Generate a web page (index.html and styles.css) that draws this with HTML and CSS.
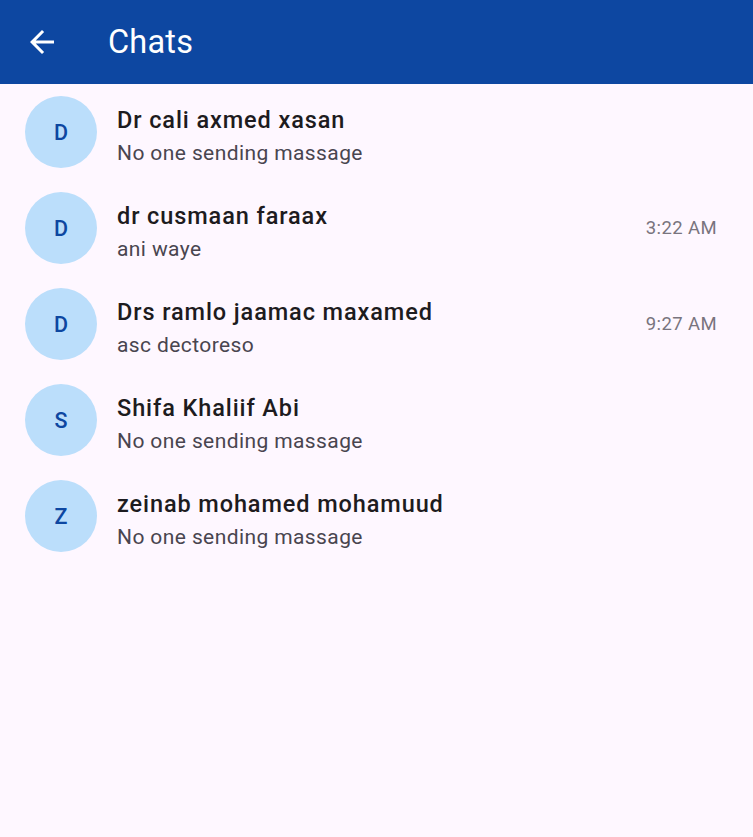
FILE: index.html
```html
<!DOCTYPE html>
<html>
<head>
<meta charset="utf-8">
<link rel="stylesheet" href="styles.css">
</head>
<body>
<header class="appbar">
  <button class="back" aria-label="Back">
    <svg width="36" height="36" viewBox="0 0 24 24"><path d="M20 11H7.83l5.59-5.59L12 4l-8 8 8 8 1.41-1.41L7.83 13H20v-2z" fill="#fff"/></svg>
  </button>
  <h1 class="title">Chats</h1>
</header>
<ul class="list">
  <li class="tile">
    <div class="avatar">D</div>
    <div class="texts"><div class="name">Dr cali axmed xasan</div><div class="sub">No one sending massage</div></div>
  </li>
  <li class="tile">
    <div class="avatar">D</div>
    <div class="texts"><div class="name">dr cusmaan faraax</div><div class="sub">ani waye</div></div>
    <div class="time">3:22 AM</div>
  </li>
  <li class="tile">
    <div class="avatar">D</div>
    <div class="texts"><div class="name">Drs ramlo jaamac maxamed</div><div class="sub">asc dectoreso</div></div>
    <div class="time">9:27 AM</div>
  </li>
  <li class="tile">
    <div class="avatar">S</div>
    <div class="texts"><div class="name">Shifa Khaliif Abi</div><div class="sub">No one sending massage</div></div>
  </li>
  <li class="tile">
    <div class="avatar">Z</div>
    <div class="texts"><div class="name">zeinab mohamed mohamuud</div><div class="sub">No one sending massage</div></div>
  </li>
</ul>
</body>
</html>
```
FILE: styles.css
```css
html, body {
  margin: 0;
  padding: 0;
  background: #fef7ff;
  font-family: Roboto, "Noto Sans", sans-serif;
  height: 100%;
}
.appbar {
  height: 84px;
  background: #0d47a1;
  display: flex;
  align-items: center;
  padding-left: 24px;
  box-sizing: border-box;
}
.back {
  background: none;
  border: 0;
  padding: 0;
  width: 36px;
  height: 36px;
  display: flex;
  cursor: pointer;
}
.title {
  margin: 0 0 0 48px;
  color: #fff;
  font-size: 32.5px;
  font-weight: 400;
  line-height: 1;
  letter-spacing: 0.2px;
}
.list {
  list-style: none;
  margin: 0;
  padding: 0;
}
.tile {
  height: 96px;
  display: flex;
  align-items: center;
  padding: 0 36px 0 25px;
}
.avatar {
  width: 72px;
  height: 72px;
  border-radius: 50%;
  background: #bbdefb;
  color: #0d47a1;
  display: flex;
  align-items: center;
  justify-content: center;
  font-size: 21.5px;
  font-weight: 500;
  flex: none;
}
.texts {
  flex: 1;
  margin: 8px 0 0 20px;
  display: flex;
  flex-direction: column;
  gap: 6px;
}
.name {
  font-size: 23.5px;
  font-weight: 500;
  color: #1d1b20;
  line-height: 28px;
  letter-spacing: 0.9px;
}
.sub {
  font-size: 21px;
  color: #49454f;
  line-height: 26px;
  letter-spacing: 0.4px;
}
.time {
  font-size: 18.5px;
  color: #79747e;
  letter-spacing: 0.4px;
}
```
